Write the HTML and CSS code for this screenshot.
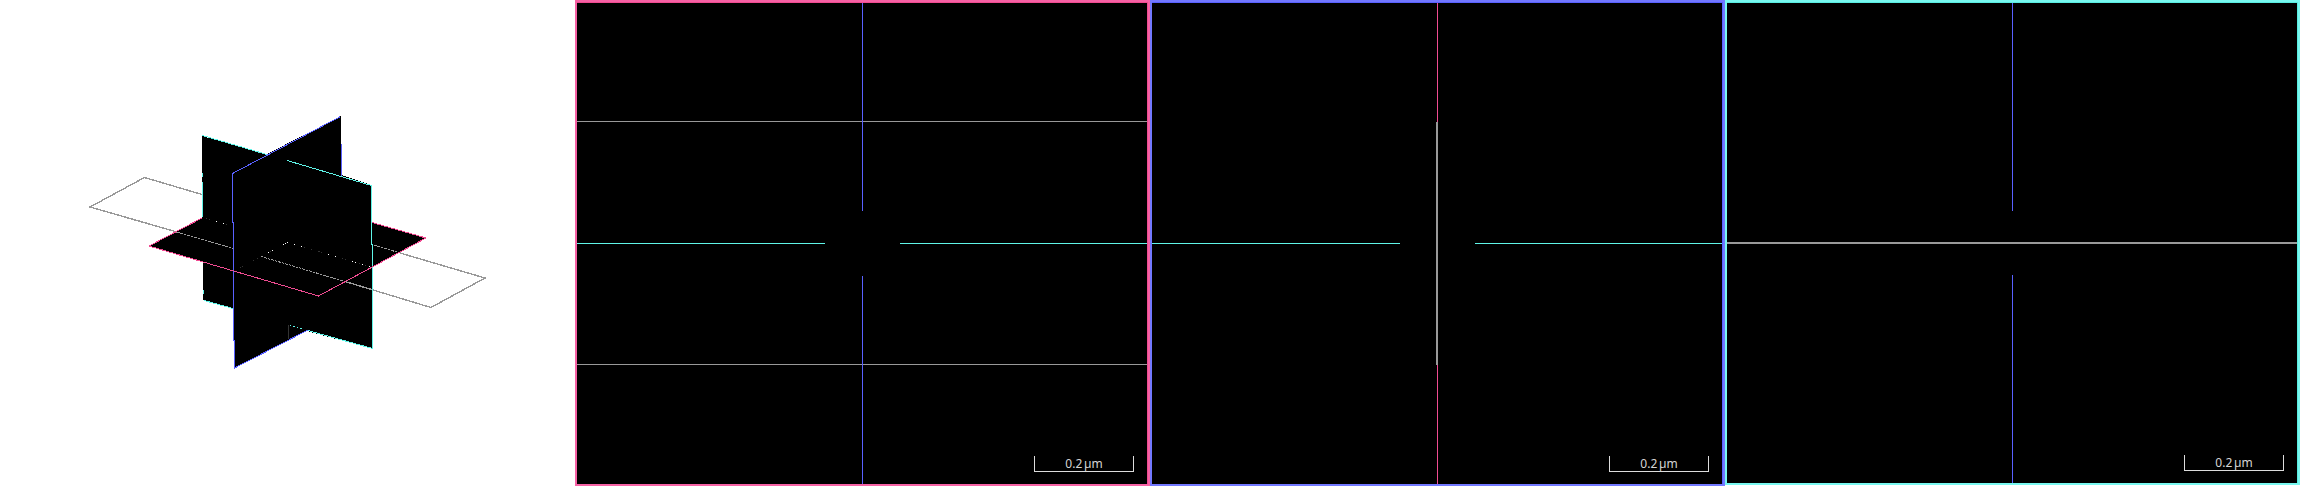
FILE: index.html
```html
<!DOCTYPE html>
<html lang="en">
<head>
<meta charset="utf-8">
<title>Orthogonal views</title>
<link rel="stylesheet" href="styles.css">
</head>
<body>
<main class="views">
  <section class="view overview">
    <svg class="scene" viewBox="0 0 575 486" shape-rendering="crispEdges">
      <path class="plane" d="M202 136L267 154L341 116V175L372 185V223L426 238L373 267V349L307 331L235 367L233 308L203 300V262L150 246L202 218Z"/>
      <g class="ink">
        <path class="gray outer" d="M202 194.500L144.500 177.500L90 207L177 232M345 281.500L431 307.500L485 278L400 253"/>
        <path class="gray dashed" d="M177 232L233 248.500M261 256.500L345 281.500M374 245L400 253"/>
        <path class="cyan" d="M202.500 135.500L267 154.500M287 160.500L371.500 185.500V244L372.500 245V348.500L306 330M202.500 173V177M202.500 182V217M203.500 290V294M204 300.500L233 308.500"/>
        <path class="cyan" d="M290 325.500h1M293 326.500h2M297 327.500h1M300 328.500h2"/>
        <path class="blue" d="M341.500 176V144M340.500 116.500L232.500 173.500V222L233.500 223V340L234.500 341V368L308 330"/>
        <path class="pink" d="M202 218L149 246L318.500 296L426 238L372 222.500"/>
        <path class="dim" d="M288.500 325V339M206 218.500h1M209 219.500h1M226 224.500h1M240 267.500h1M242 266.500h1M253 260.500h1M257 258.500h1M270 251.500h1M304 247.500h1M311 249.500h1M318 251.500h2M321 252.500h1M335 256.500h1M342 258.500h1M345 259.500h1M359 263.500h1M365 265.500h1"/>
        <path class="bright" d="M216 221.500h1M223 223.500h1M268 252.500h1M272 250.500h1M283 244.500h1M285 243.500h1M287 242.500h1M294 244.500h1M301 246.500h1M328 254.500h1M335 256.500h1M352 261.500h1M355 262.500h1M362 264.500h1M369 266.500h1"/>
      </g>
    </svg>
  </section>
  <section class="view slice xy">
    <svg class="guides" viewBox="0 0 575 486" shape-rendering="crispEdges">
      <path class="gray" d="M2 121.500H572M2 364.500H572"/>
      <path class="cyan" d="M2 243.500H250M325 243.500H573"/>
      <path class="blue" d="M287.500 2V211M287.500 276V484"/>
    </svg>
    <div class="scale">0.2 µm</div>
  </section>
  <section class="view slice yz">
    <svg class="guides" viewBox="0 0 575 486" shape-rendering="crispEdges">
      <path class="pink" d="M287.500 2V122M287.500 365V484"/>
      <path class="gray section" d="M287 122V365"/>
      <path class="cyan" d="M2 243.500H250M325 243.500H573"/>
    </svg>
    <div class="scale">0.2 µm</div>
  </section>
  <section class="view slice xz">
    <svg class="guides" viewBox="0 0 575 486" shape-rendering="crispEdges">
      <path class="gray section" d="M2 243H573"/>
      <path class="blue" d="M287.500 2V211M287.500 275V483"/>
    </svg>
    <div class="scale">0.2 µm</div>
  </section>
</main>
</body>
</html>
```
FILE: styles.css
```css
body {
  margin: 0;
  background: #fff;
}

.views {
  display: grid;
  grid-template-columns: repeat(4, 575px);
  height: 486px;
}

.view {
  position: relative;
  box-sizing: border-box;
  height: 486px;
}

.scene {
  display: block;
  width: 575px;
  height: 486px;
}

.slice {
  display: flex;
  align-items: flex-end;
  justify-content: flex-end;
  padding: 0 16px 14px 0;
  background: #000;
}

/* Coloured frame, with a darker inner line along the top and right */
.slice::after {
  content: "";
  position: absolute;
  inset: 0;
  border: 2px solid var(--frame);
  box-shadow: inset -1px 1px 0 var(--edge);
}

.xy { --frame: #f762a5; --edge: #f04b91; }
.yz { --frame: #7278ff; --edge: #5961ff; }
.xz { --frame: #78f8f0; --edge: #58ede0; height: 485px; }

.guides {
  position: absolute;
  inset: 0 auto auto 0;
  width: 575px;
  height: 486px;
}

.scene path,
.guides path {
  fill: none;
  stroke-width: 1px;
}

.scene .plane { fill: #000; }
.scene .outer { stroke-width: 1.4px; }
.scene .dashed { stroke-dasharray: 2.6 1; }
.guides .section { stroke-width: 2px; }
.gray { stroke: #999; }
.cyan { stroke: #5ff5e8; }
.blue { stroke: #5961ff; }
.pink { stroke: #f04b91; }
.dim { stroke: #333; }
.bright { stroke: #fff; }

.scale {
  box-sizing: border-box;
  width: 100px;
  height: 16px;
  border: 1px solid #ddd;
  border-top: 0;
  color: #d5d5d5;
  font: 12px/15px "Noto Sans", sans-serif;
  word-spacing: -1.5px;
  text-align: center;
}
```
